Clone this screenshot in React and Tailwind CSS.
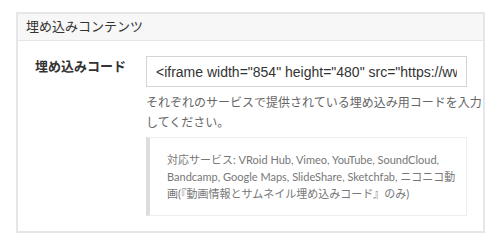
import React from 'react';

const jp = { fontFamily: '"Liberation Sans", "Noto Sans CJK JP", sans-serif' };
const note = { fontFamily: 'Lato, "Noto Sans CJK JP", sans-serif' };

const EmbedPanel = () => {
  return (
    <div className="bg-white w-[500px] h-[243px] pt-[12px] pl-[16px]" style={jp}>
      <div className="w-[469px] h-[221px] border-2 border-[#e6e6e8] bg-white">
        {/* header */}
        <div className="h-[27px] bg-[#f7f7f7] border-b border-[#e6e6e8] pl-[8px] flex items-center">
          <span className="text-[13px] text-[#333]">埋め込みコンテンツ</span>
        </div>
        {/* row */}
        <div className="flex pl-[17px] pt-[15px]">
          <label className="w-[111px] shrink-0 pt-[1px] text-[13px] font-bold text-[#333]">
            埋め込みコード
          </label>
          <div className="w-[336px]">
            <input
              readOnly
              value={'<iframe width="854" height="480" src="https://www.youtube.com/embed/'}
              className="w-[321px] h-[31px] border border-[#d5d5d5] px-[9px] text-[14px] text-[#333] outline-none"
              style={jp}
            />
            <p className="mt-[6px] text-[12px] leading-[20px] text-[#666]">
              それぞれのサービスで提供されている埋め込み用コードを入力してください。
            </p>
            <div className="mt-[4px] w-[321px] border border-[#eeeeee] border-l-4 border-l-[#dddddd] pl-[17px] pr-[10px] py-[13px]">
              <p className="text-[11px] leading-[17px] text-[#777]" style={note}>
                対応サービス: VRoid Hub, Vimeo, YouTube, SoundCloud, Bandcamp, Google Maps, SlideShare, Sketchfab, ニコニコ動画(『動画情報とサムネイル埋め込みコード』のみ)
              </p>
            </div>
          </div>
        </div>
      </div>
    </div>
  );
};

export default function App() {
  return <EmbedPanel />;
}
